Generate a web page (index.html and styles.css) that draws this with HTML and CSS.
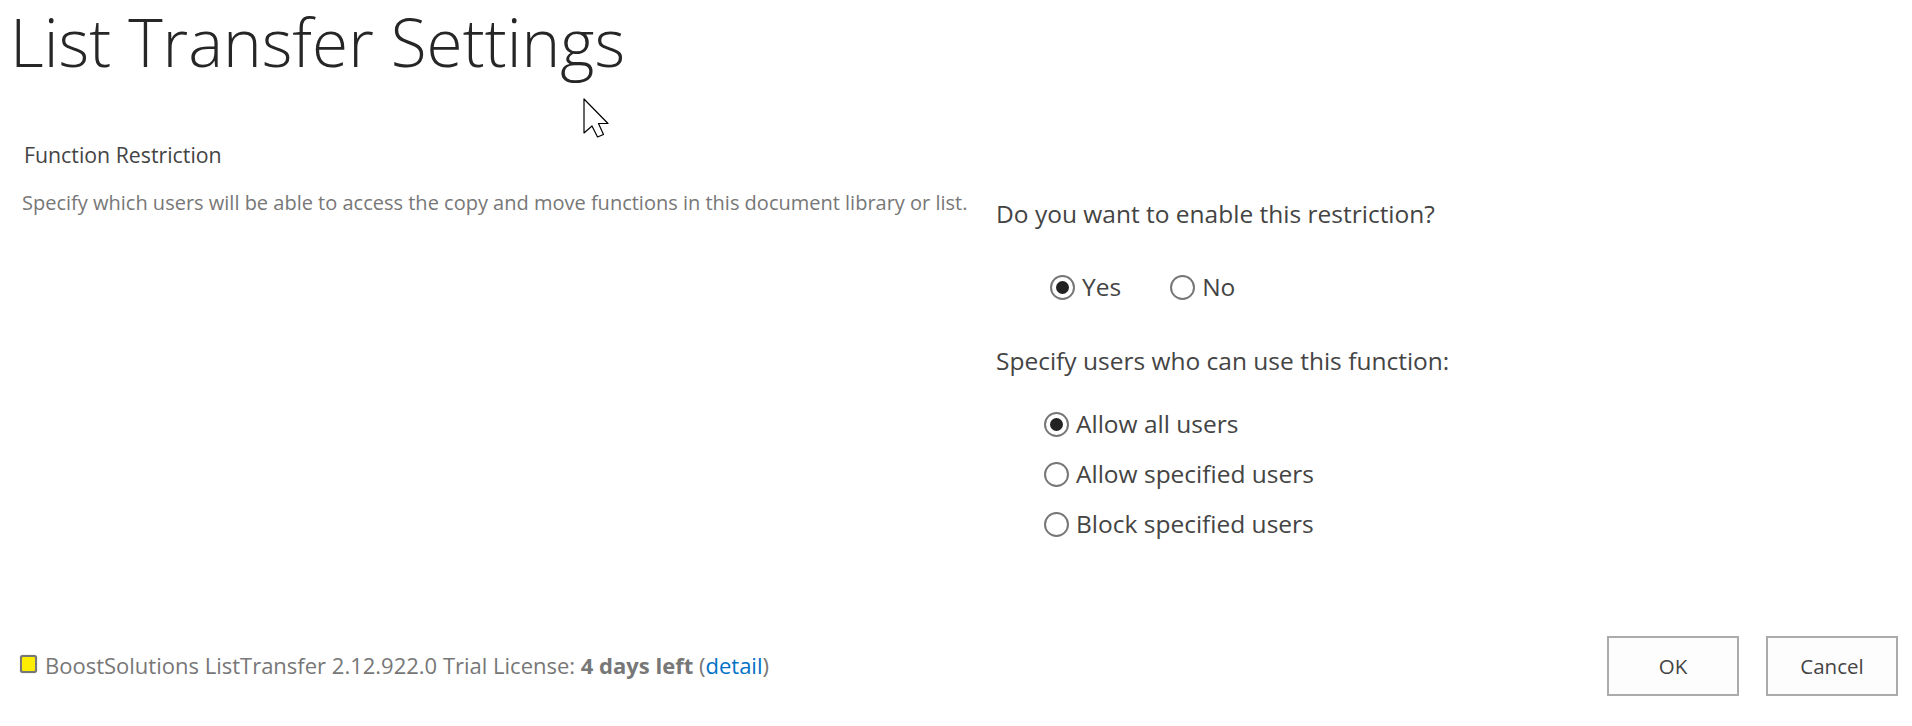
FILE: index.html
```html
<!DOCTYPE html>
<html lang="en">
<head>
<meta charset="utf-8">
<title>List Transfer Settings</title>
<link rel="stylesheet" href="styles.css">
</head>
<body>
<h1 class="title">List Transfer Settings</h1>
<svg class="cursor" width="26" height="40" viewBox="0 0 26 40"><path d="M1 1V35L9 28L14.500 39L20.500 36.500L15.500 25.500H25Z" fill="#fff" stroke="#000" stroke-width="1.200" stroke-linejoin="round"/></svg>
<main class="section">
  <div class="info">
    <h2 class="info-title">Function Restriction</h2>
    <p class="info-text">Specify which users will be able to access the copy and move functions in this document library or list.</p>
  </div>
  <div class="form">
    <p class="question">Do you want to enable this restriction?</p>
    <div class="inline-options">
      <label class="option yes"><span class="radio checked"></span>Yes</label>
      <label class="option"><span class="radio"></span>No</label>
    </div>
    <p class="question second">Specify users who can use this function:</p>
    <div class="stack-options">
      <label class="option"><span class="radio checked"></span>Allow all users</label>
      <label class="option"><span class="radio"></span>Allow specified users</label>
      <label class="option"><span class="radio"></span>Block specified users</label>
    </div>
  </div>
</main>
<footer class="footer">
  <div class="license"><span class="led"></span>BoostSolutions ListTransfer 2.12.922.0 Trial License: <b>4 days left</b> (<a class="link" href="#">detail</a>)</div>
  <div class="buttons">
    <button class="btn">OK</button>
    <button class="btn">Cancel</button>
  </div>
</footer>
</body>
</html>
```
FILE: styles.css
```css
* { box-sizing: border-box; }
html, body { margin: 0; padding: 0; }
body {
  width: 1912px;
  height: 726px;
  background: #fff;
  font-family: "Open Sans", "Noto Sans", sans-serif;
  overflow: hidden;
  position: relative;
}
.title {
  margin: 0;
  padding: 0 0 0 10px;
  height: 138px;
  font-size: 65.700px;
  line-height: 83px;
  font-weight: 300;
  color: #262626;
}
.cursor { position: absolute; left: 583px; top: 98px; }
.section { display: flex; height: 498px; }
.info { width: 996px; flex: none; padding-left: 22px; }
.info-title {
  margin: 0 0 0 2px;
  font-size: 21.300px;
  line-height: 34px;
  font-weight: 400;
  color: #444;
}
.info-text {
  margin: 17px 0 0;
  font-size: 20px;
  line-height: 28px;
  color: #777;
}
.form { padding-top: 56px; font-size: 24.500px; color: #444; }
.question { margin: 0; line-height: 40px; }
.second { margin-top: 34px; }
.inline-options { display: flex; gap: 49px; margin-top: 33px; padding-left: 54px; }
.stack-options { display: flex; flex-direction: column; gap: 10px; margin-top: 23px; padding-left: 48px; }
.option { display: flex; align-items: center; gap: 7px; line-height: 40px; height: 40px; }
.radio {
  width: 25px;
  height: 25px;
  border-radius: 50%;
  border: 2px solid #777;
  background: #fff;
  flex: none;
  display: flex;
  align-items: center;
  justify-content: center;
}
.radio.checked::after {
  content: "";
  width: 13px;
  height: 13px;
  border-radius: 50%;
  background: #222;
}
.footer { display: flex; justify-content: space-between; align-items: center; height: 60px; padding: 0 14px 0 20px; }
.license { display: flex; align-items: center; white-space: pre; font-size: 22px; color: #777; padding-bottom: 2px; }
.led {
  width: 17px;
  height: 18px;
  margin: -3px 8px 0 0;
  background: #ffee00;
  border: 2px solid #777;
  border-radius: 3px;
  box-shadow: 0 0 1px #777;
}
.license b { font-weight: 700; }
.link { color: #0072c6; text-decoration: none; }
.buttons { display: flex; gap: 27px; }
.btn {
  width: 132px;
  height: 60px;
  background: #fdfdfd;
  border: 2px solid #ababab;
  font: 400 20.500px "Open Sans", "Noto Sans", sans-serif;
  color: #444;
}
```
